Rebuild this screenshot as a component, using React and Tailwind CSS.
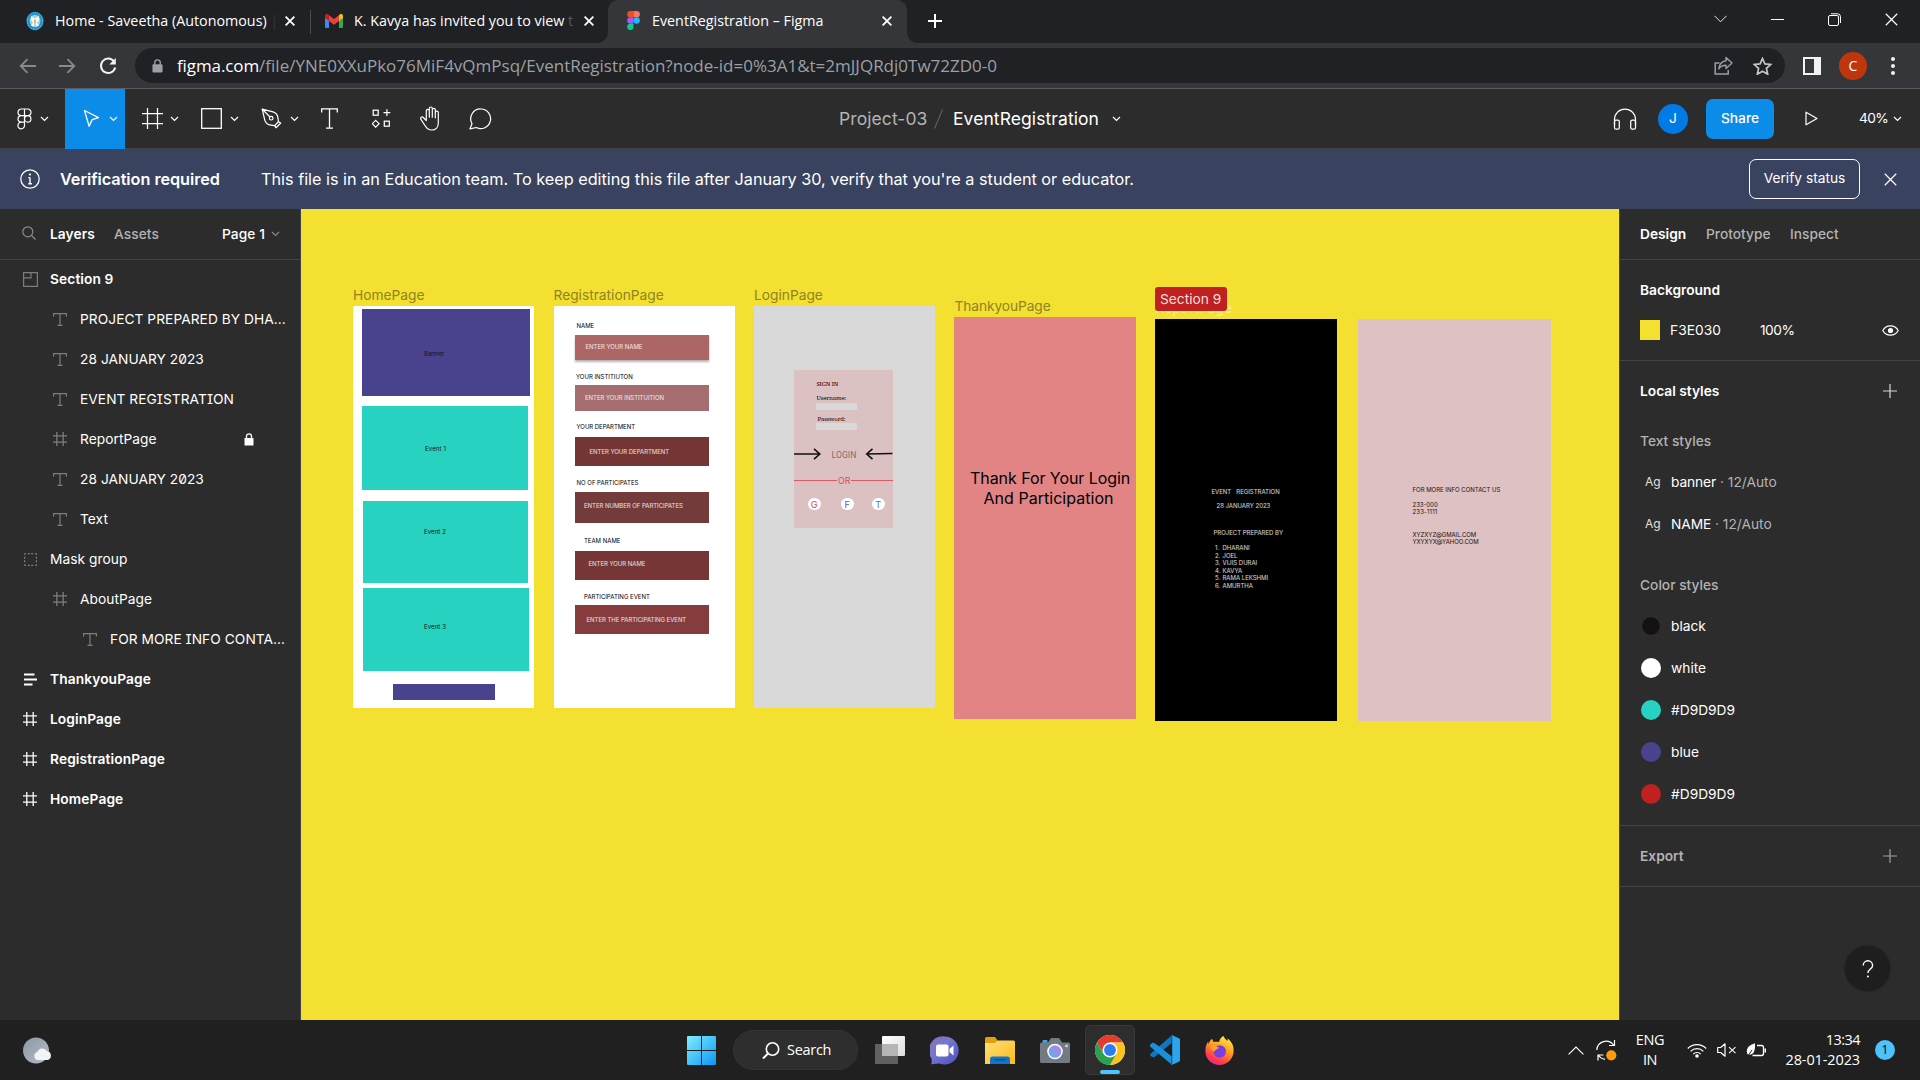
import React from "react";

const UI = "font-['Inter',sans-serif]";
const SYS = "font-['Open_Sans','Noto_Sans',sans-serif]";

function Svg({ w, h, children, className = "", vb }) {
  return (
    <svg width={w} height={h} viewBox={vb || `0 0 ${w} ${h}`} fill="none" className={"block shrink-0 " + className}>
      {children}
    </svg>
  );
}

function Chevron({ className = "" }) {
  return (
    <Svg w={9} h={6} className={className}>
      <path d="M1 1l3.5 3.5L8 1" stroke="currentColor" strokeWidth="1.2" />
    </Svg>
  );
}

function Cross({ size = 10, sw = 1.8, className = "" }) {
  return (
    <Svg w={size} h={size} vb="0 0 10 10" className={className}>
      <path d="M0.6 0.6l8.8 8.8M9.4 0.6L0.6 9.4" stroke="currentColor" strokeWidth={sw} />
    </Svg>
  );
}

function FigmaMark({ className = "" }) {
  return (
    <Svg w={13} h={19} vb="0 0 12 18" className={className}>
      <path d="M3 0h3v6H3a3 3 0 010-6z" fill="#f24e1e" />
      <path d="M6 0h3a3 3 0 010 6H6z" fill="#ff7262" />
      <path d="M3 6h3v6H3a3 3 0 010-6z" fill="#a259ff" />
      <circle cx="9" cy="9" r="3" fill="#1abcfe" />
      <path d="M3 12h3v3a3 3 0 11-3-3z" fill="#0acf83" />
    </Svg>
  );
}

function TabStrip() {
  return (
    <div className={"flex h-[43px] bg-[#202124] text-white text-[14.300px] " + SYS}>
      <div className="flex h-[41px] w-[310px] items-center pl-[26px] pr-[15px]">
        <Svg w={18} h={20}>
          <ellipse cx="9" cy="10" rx="8.6" ry="9.3" fill="#1d8fc4" />
          <ellipse cx="9" cy="10" rx="7.6" ry="8.4" stroke="#7cc4e4" strokeWidth="1" strokeDasharray="1.2 1" />
          <ellipse cx="9" cy="10" rx="5.4" ry="6.2" fill="#9bd2ea" />
          <path d="M5 4.500l3 2.500h2l3-2.500v5l-2 2 2 3-2.500 1-1.500-3-1.500 3-2.500-1 2-3-2-2z" fill="#f4fafc" />
          <path d="M8 8.500h2l-.4 5h-1.200z" fill="#f1a14a" />
        </Svg>
        <div className="ml-[11px] whitespace-nowrap">
          Home - Saveetha (Autonomous) <span className="text-[#34353a]">|</span>
        </div>
        <Cross size={10} className="ml-auto" />
      </div>
      <div className="mt-[10px] h-[24px] w-px bg-[#4a4c50]" />
      <div className="flex h-[41px] w-[297px] items-center pl-[14px] pr-[14px]">
        <Svg w={18} h={14} vb="0 0 18 14">
          <path d="M0 2v10.800A1.200 1.200 0 001.200 14H4V5.500z" fill="#4285f4" />
          <path d="M14 5.500V14h2.800a1.200 1.200 0 001.200-1.200V2z" fill="#34a853" />
          <path d="M14 1.200V7l4-3V2c0-1.900-2-2.700-3.300-1.600z" fill="#fbbc04" />
          <path d="M4 7V1.200l5 3.800 5-3.800V7l-5 3.800z" fill="#ea4335" />
          <path d="M0 2v2l4 3V1.200L3.300.4C2-.7 0 .1 0 2z" fill="#c5221f" />
        </Svg>
        <div className="ml-[11px] whitespace-nowrap">
          K. Kavya has invited you to view <span className="text-[#55565a]">t</span>
        </div>
        <Cross size={10} className="ml-auto" />
      </div>
      <div className="relative flex h-[43px] w-[299px] items-center rounded-t-[10px] bg-[#35363a] pb-[2px] pl-[19px] pr-[15px]">
        <div className="absolute -left-[10px] bottom-0 h-[10px] w-[10px] bg-[radial-gradient(circle_at_0_0,#202124_9.500px,#35363a_10px)]" />
        <div className="absolute -right-[10px] bottom-0 h-[10px] w-[10px] bg-[radial-gradient(circle_at_100%_0,#202124_9.500px,#35363a_10px)]" />
        <FigmaMark />
        <span className="ml-[12px] whitespace-nowrap">EventRegistration – Figma</span>
        <Cross size={10} className="ml-auto" />
      </div>
      <div className="flex h-[41px] flex-1 items-center">
        <Svg w={14} h={14} className="ml-[21px]">
          <path d="M7 0v14M0 7h14" stroke="#fff" strokeWidth="2" />
        </Svg>
        <div className="ml-auto flex items-center pb-[3px]">
          <Svg w={13} h={8} className="mr-[44px]">
            <path d="M.5.8l6 6 6-6" stroke="#e8e8e8" strokeWidth="1" />
          </Svg>
          <div className="mr-[44px] h-px w-[13px] bg-white" />
          <Svg w={13} h={13} className="mr-[44px]">
            <rect x=".5" y="2.500" width="10" height="10" rx="1.500" stroke="#fff" />
            <path d="M3 .8h6.500a3 3 0 013 3V10" stroke="#fff" />
          </Svg>
          <Cross size={13} sw={0.9} className="mr-[22px]" />
        </div>
      </div>
    </div>
  );
}

function AddressBar() {
  return (
    <div className="flex h-[46px] items-center border-b border-[#5b5c5f] bg-[#35363a]">
      <Svg w={18} h={16} className="ml-[19px] text-[#87898c]">
        <path d="M17 8H2M8.500 1.200L1.700 8l6.800 6.800" stroke="currentColor" strokeWidth="1.800" />
      </Svg>
      <Svg w={18} h={16} className="ml-[21px] text-[#87898c]">
        <path d="M1 8h15M9.500 1.200L16.300 8l-6.800 6.800" stroke="currentColor" strokeWidth="1.800" />
      </Svg>
      <Svg w={18} h={18} className="ml-[23px]">
        <path d="M15 4.500A7.200 7.200 0 1016.200 10.500" stroke="#f1f3f4" strokeWidth="2" />
        <path d="M16.800 1v6.500h-6.500z" fill="#f1f3f4" />
      </Svg>
      <div className="ml-[18px] flex h-[35px] w-[1650px] items-center rounded-full bg-[#202124] pl-[17px] pr-[13px]">
        <Svg w={11} h={14} vb="0 0 12 15">
          <rect x=".5" y="5.500" width="11" height="9" rx="1.300" fill="#9aa0a6" />
          <path d="M3 6V3.800a3 3 0 016 0V6" stroke="#9aa0a6" strokeWidth="1.500" />
        </Svg>
        <div className={"ml-[14px] whitespace-nowrap text-[17px] text-[#9aa0a6] " + SYS}>
          <span className="tracking-[-0.100px] text-white">figma.com</span>
          <span>/file/YNE0XXuPko76MiF4vQmPsq/EventRegistration?node-id=0%3A1&amp;t=2mJJQRdj0Tw72ZD0-0</span>
        </div>
        <Svg w={19} h={19} className="ml-auto">
          <path d="M5.500 7H1.200v11h13v-4" stroke="#9aa0a6" strokeWidth="1.500" />
          <path d="M12 1.500L18 7l-6 5.500V9.300c-3.500 0-5.500 1-7.200 3.500.5-4.500 3-7.300 7.200-8z" stroke="#9aa0a6" strokeWidth="1.400" strokeLinejoin="round" />
        </Svg>
        <Svg w={19} h={18} className="ml-[20px]">
          <path d="M9.500 1.500l2.400 5.400 5.900.6-4.400 3.900 1.300 5.800-5.200-3-5.200 3 1.300-5.800L1.200 7.500l5.900-.6z" stroke="#c4c7ca" strokeWidth="1.700" />
        </Svg>
      </div>
      <Svg w={18} h={18} className="ml-[18px]">
        <rect x="1" y="1" width="16" height="16" stroke="#f1f3f4" strokeWidth="2" />
        <rect x="11" y="1" width="6" height="16" fill="#f1f3f4" />
      </Svg>
      <div className={"ml-[18px] flex h-[28px] w-[28px] items-center justify-center rounded-full bg-[#bf360c] text-[14px] text-white " + SYS}>C</div>
      <div className="ml-[24px] flex flex-col gap-[3px]">
        <div className="h-[4px] w-[4px] rounded-full bg-[#f1f3f4]" />
        <div className="h-[4px] w-[4px] rounded-full bg-[#f1f3f4]" />
        <div className="h-[4px] w-[4px] rounded-full bg-[#f1f3f4]" />
      </div>
    </div>
  );
}

function FigmaToolbar() {
  return (
    <div className={"flex h-[60px] items-center border-b border-[#444] bg-[#2c2c2c] text-white " + UI}>
      <div className="flex w-[65px] items-center pl-[17px]">
        <Svg w={15} h={22}>
          <path d="M7.500 1H4.300a3.300 3.300 0 000 6.600h3.200zM7.500 1h3.200a3.300 3.300 0 010 6.600H7.500zM7.500 7.600H4.300a3.300 3.300 0 000 6.600h3.200zM7.500 14.200H4.300a3.300 3.300 0 103.200 3.300z" stroke="#fff" strokeWidth="1.200" />
          <circle cx="10.700" cy="10.900" r="3.200" stroke="#fff" strokeWidth="1.200" />
        </Svg>
        <Chevron className="ml-[8px]" />
      </div>
      <div className="flex h-[60px] w-[60px] items-center bg-[#0c8ce9] pl-[18px]">
        <Svg w={17} h={19}>
          <path d="M1.500 1.500L15.500 8.600l-6.300 2-3.100 6.600z" stroke="#fff" strokeWidth="1.300" strokeLinejoin="round" />
        </Svg>
        <Chevron className="ml-[9px]" />
      </div>
      <div className="flex w-[60px] items-center pl-[17px]">
        <Svg w={21} h={21}>
          <path d="M5.500 0v21M15.500 0v21M0 5.500h21M0 15.500h21" stroke="#fff" strokeWidth="1.250" />
        </Svg>
        <Chevron className="ml-[7px]" />
      </div>
      <div className="flex w-[60px] items-center pl-[16px]">
        <Svg w={21} h={21}>
          <rect x=".7" y=".7" width="19.600" height="19.600" stroke="#fff" strokeWidth="1.300" />
        </Svg>
        <Chevron className="ml-[8px]" />
      </div>
      <div className="flex w-[60px] items-center pl-[16px]">
        <Svg w={21} h={21}>
          <path d="M1.200 1.200l10.800 2.700c3 .9 4.700 3.300 5 6.300l.4 3.600-3.800 3.800-3.600-.4c-3-.3-5.400-2-6.200-5z" stroke="#fff" strokeWidth="1.250" strokeLinejoin="round" />
          <path d="M1.200 1.200l7.600 7.600M17.200 13.500l2.500 1.500-4.700 4.700-1.500-2.400" stroke="#fff" strokeWidth="1.250" strokeLinejoin="round" />
          <circle cx="10.200" cy="10.200" r="1.800" stroke="#fff" strokeWidth="1.200" />
        </Svg>
        <Chevron className="ml-[8px]" />
      </div>
      <div className="flex w-[48px] justify-center">
        <Svg w={17} h={21}>
          <path d="M.7 4.500V.8h15.600v3.700M8.500.8v19.400M5 20.200h7" stroke="#fff" strokeWidth="1.300" />
        </Svg>
      </div>
      <div className="flex w-[56px] justify-center">
        <Svg w={19} h={19}>
          <rect x="1.200" y="1.200" width="5" height="5" stroke="#fff" strokeWidth="1.250" />
          <path d="M14.900.3v6.800M11.500 3.700h6.800" stroke="#fff" strokeWidth="1.250" />
          <path d="M3.700 11.300l3.400 3.400-3.400 3.400-3.400-3.400z" stroke="#fff" strokeWidth="1.200" />
          <rect x="12.300" y="12.200" width="5" height="5" stroke="#fff" strokeWidth="1.250" />
        </Svg>
      </div>
      <div className="flex w-[42px] justify-center">
        <Svg w={23} h={25}>
          <path d="M7.300 14.500V4.800a1.500 1.500 0 013 0v6.400V2.500a1.500 1.500 0 013 0v8.700V3.800a1.500 1.500 0 013 0v8V6.600a1.500 1.500 0 013 0V17c0 4-2.500 7-6.500 7-3.500 0-5-1.500-6.500-4l-4.500-6.800c-.9-1.700 1.200-3 2.500-1.700z" stroke="#fff" strokeWidth="1.200" strokeLinejoin="round" />
        </Svg>
      </div>
      <div className="flex w-[58px] justify-center">
        <Svg w={23} h={22}>
          <path d="M12 1a9.800 9.800 0 11-4.700 18.500L1 20.800l2-5A9.900 9.900 0 0112 1z" stroke="#fff" strokeWidth="1.250" strokeLinejoin="round" />
        </Svg>
      </div>
      <div className="ml-[330px] flex items-center whitespace-nowrap pt-px text-[17.500px] tracking-[0.080px]">
        <div className="w-[95px] text-[#b3b3b3]">Project-03</div>
        <Svg w={9} h={20} className="mr-[10px]"><path d="M8.500.5L.5 19.500" stroke="#6b6b6b" /></Svg>
        <div className="w-[159px]">EventRegistration</div>
        <Chevron />
      </div>
      <div className="ml-auto flex items-center">
        <Svg w={24} h={22} className="mr-[21px]">
          <path d="M1.500 17V11.500a10.500 10.500 0 0121 0V17" stroke="#fff" strokeWidth="1.250" />
          <rect x="1.500" y="12" width="4.800" height="9.200" rx="1.500" stroke="#fff" strokeWidth="1.250" />
          <rect x="17.700" y="12" width="4.800" height="9.200" rx="1.500" stroke="#fff" strokeWidth="1.250" />
        </Svg>
        <div className="flex h-[30px] w-[30px] items-center justify-center rounded-full bg-[#007be5] text-[13.750px]">J</div>
        <div className="ml-[18px] flex h-[40px] w-[68px] items-center justify-center rounded-[7px] bg-[#0c8ce9] text-[13.750px] font-medium">Share</div>
        <Svg w={13} h={15} className="ml-[31px]"><path d="M1 1.200l11 6.300-11 6.300z" stroke="#fff" strokeWidth="1.200" strokeLinejoin="round" /></Svg>
        <div className="ml-[41px] w-[34px] text-[13.750px] tracking-[-0.600px]">40%</div>
        <Chevron className="mr-[18px]" />
      </div>
    </div>
  );
}

function Notice() {
  return (
    <div className={"flex h-[60px] items-center bg-[#394360] text-[16.250px] text-white " + UI}>
      <Svg w={20} h={20} className="ml-[20px]">
        <circle cx="10" cy="10" r="9.200" stroke="#fff" strokeWidth="1.250" />
        <path d="M10 8.500v6M8.300 14.700h3.600M8.300 8.600H10" stroke="#fff" strokeWidth="1.400" />
        <circle cx="10" cy="5.500" r="1.100" fill="#fff" />
      </Svg>
      <div className="ml-[20px] w-[201px] whitespace-nowrap font-semibold tracking-[-0.040px]">Verification required</div>
      <div className="whitespace-nowrap tracking-[-0.010px]">This file is in an Education team. To keep editing this file after January 30, verify that you're a student or educator.</div>
      <div className="ml-auto mr-[24px] flex h-[40px] w-[111px] items-center justify-center rounded-[7px] border border-white pb-[2px] text-[13.750px]">Verify status</div>
      <Cross size={13} sw={0.9} className="mr-[23px]" />
    </div>
  );
}

const icons = {
  text: (
    <Svg w={14} h={13}>
      <path d="M.6 3.500V.7h12.800v2.800M7 .7v11.600M4.500 12.300h5" stroke="currentColor" strokeWidth="1.200" />
    </Svg>
  ),
  frame: (
    <Svg w={14} h={14}>
      <path d="M3.800 0v14M10.200 0v14M0 3.800h14M0 10.200h14" stroke="currentColor" strokeWidth="1.300" />
    </Svg>
  ),
  section: (
    <Svg w={15} h={15}>
      <path d="M.6.6h13.800v13.800H.6zM8 .6v5.200H.6" stroke="currentColor" strokeWidth="1.200" />
    </Svg>
  ),
  mask: (
    <Svg w={13} h={13}>
      <rect x=".6" y=".6" width="11.800" height="11.800" stroke="currentColor" strokeWidth="1.200" strokeDasharray="1.200 2 2 1.400 2 2 1.200 0" />
    </Svg>
  ),
  auto: (
    <Svg w={13} h={13}>
      <path d="M0 1.500h10.500M0 6.500h13M0 11.500h8.500" stroke="currentColor" strokeWidth="2" />
    </Svg>
  ),
};

function Layer({ icon, level = 0, bold, bright, locked, children }) {
  const pad = level === 2 ? "pl-[80px]" : level === 1 ? "pl-[50px]" : "pl-[20px]";
  return (
    <div className={"flex h-[40px] items-center " + pad}>
      <div className={"flex w-[20px] justify-center " + (bright ? "text-white" : "text-[#7d7d7d]")}>{icons[icon]}</div>
      <div className={"ml-[10px] whitespace-nowrap [font-feature-settings:'ss02'] " + (bold ? "font-semibold tracking-[0.100px]" : "tracking-[0.040px]")}>{children}</div>
      {locked && (
        <Svg w={10} h={13} className="ml-auto mr-[46px]">
          <rect x=".5" y="5" width="9" height="7.500" rx=".6" fill="#fff" />
          <path d="M2.500 5.500V3.300a2.500 2.500 0 015 0v2.200" stroke="#fff" strokeWidth="1.300" />
        </Svg>
      )}
    </div>
  );
}

function LeftPanel() {
  return (
    <div className={"w-[301px] shrink-0 border-r border-[#444] bg-[#2c2c2c] text-[13.750px] text-white " + UI}>
      <div className="flex h-[51px] items-center border-b border-[#444] pl-[22px]">
        <Svg w={14} h={14} className="mb-[2px] text-[#8a8a8a]">
          <circle cx="5.800" cy="5.800" r="5" stroke="currentColor" strokeWidth="1.200" />
          <path d="M9.500 9.500l4 4" stroke="currentColor" strokeWidth="1.200" />
        </Svg>
        <div className="ml-[14px] w-[64px] font-semibold tracking-[0.090px]">Layers</div>
        <div className="w-[108px] font-medium tracking-[0.070px] text-[#b3b3b3]">Assets</div>
        <div className="w-[49px] whitespace-nowrap font-medium tracking-[0.070px]">Page 1</div>
        <Chevron className="text-[#8a8a8a]" />
      </div>
      <div className="-mt-px">
        <Layer icon="section" bold>Section 9</Layer>
        <Layer icon="text" level={1}>PROJECT PREPARED BY DHA...</Layer>
        <Layer icon="text" level={1}>28 JANUARY 2023</Layer>
        <Layer icon="text" level={1}>EVENT REGISTRATION</Layer>
        <Layer icon="frame" level={1} locked>ReportPage</Layer>
        <Layer icon="text" level={1}>28 JANUARY 2023</Layer>
        <Layer icon="text" level={1}>Text</Layer>
        <Layer icon="mask">Mask group</Layer>
        <Layer icon="frame" level={1}>AboutPage</Layer>
        <Layer icon="text" level={2}>FOR MORE INFO CONTA...</Layer>
        <Layer icon="auto" bold bright>ThankyouPage</Layer>
        <Layer icon="frame" bold bright>LoginPage</Layer>
        <Layer icon="frame" bold bright>RegistrationPage</Layer>
        <Layer icon="frame" bold bright>HomePage</Layer>
      </div>
    </div>
  );
}

function Plus({ className = "" }) {
  return (
    <Svg w={14} h={14} className={className}>
      <path d="M7 0v14M0 7h14" stroke="currentColor" strokeWidth="1.200" />
    </Svg>
  );
}

function ColorRow({ swatch, children }) {
  return (
    <div className="flex h-[42px] items-center pl-[21px]">
      <div className={"h-[20px] w-[20px] rounded-full " + swatch} />
      <div className="ml-[10px]">{children}</div>
    </div>
  );
}

function TextStyleRow({ name }) {
  return (
    <div className="flex h-[42px] items-center whitespace-nowrap pl-[25px]">
      <span className="w-[26px] text-[12px] text-[#e0e0e0]">Ag</span>
      <span className="tracking-[-0.100px]">{name}</span>
      <span className="whitespace-pre text-[#b3b3b3]"> · 12/Auto</span>
    </div>
  );
}

function RightPanel() {
  return (
    <div className={"relative w-[301px] shrink-0 border-l border-[#444] bg-[#2c2c2c] text-[13.750px] text-white " + UI}>
      <div className="flex h-[51px] items-center border-b border-[#444] pl-[20px]">
        <div className="w-[66px] font-semibold">Design</div>
        <div className="w-[84px] font-medium text-[#b3b3b3]">Prototype</div>
        <div className="font-medium text-[#b3b3b3]">Inspect</div>
      </div>
      <div className="h-[101px] border-b border-[#444] pt-[10px]">
        <div className="flex h-[40px] items-center pl-[20px] font-semibold">Background</div>
        <div className="flex h-[40px] items-center pl-[20px]">
          <div className="h-[20px] w-[20px] bg-[#f3e030]" />
          <div className="ml-[10px] w-[90px] tracking-[0.040px]">F3E030</div>
          <span className="tracking-[-0.500px]">100%</span>
          <Svg w={17} h={11} className="ml-auto mr-[21px]">
            <path d="M.8 5.500C2.500 2.300 5.200.8 8.500.8s6 1.500 7.700 4.700c-1.700 3.200-4.400 4.700-7.700 4.700S2.500 8.700.8 5.500z" stroke="#fff" strokeWidth="1.200" />
            <circle cx="8.500" cy="5.500" r="2.600" fill="#fff" />
          </Svg>
        </div>
      </div>
      <div className="h-[465px] border-b border-[#444] pt-[10px]">
        <div className="flex h-[40px] items-center justify-between pl-[20px] pr-[23px] font-semibold">Local styles<Plus className="text-[#d8d8d8]" /></div>
        <div className="mt-[10px] flex h-[40px] items-center pl-[20px] font-medium text-[#b3b3b3]">Text styles</div>
        <TextStyleRow name="banner" />
        <TextStyleRow name="NAME" />
        <div className="mt-[20px] flex h-[40px] items-center pl-[20px] font-medium text-[#b3b3b3]">Color styles</div>
        <ColorRow swatch="border border-[#333] bg-[#171212]">black</ColorRow>
        <ColorRow swatch="bg-white">white</ColorRow>
        <ColorRow swatch="bg-[#27d3c0]">#D9D9D9</ColorRow>
        <ColorRow swatch="bg-[#49428d]">blue</ColorRow>
        <ColorRow swatch="bg-[#c02020]">#D9D9D9</ColorRow>
      </div>
      <div className="flex h-[61px] items-center justify-between border-b border-[#444] pl-[20px] pr-[23px] font-semibold text-[#b3b3b3]">Export<Plus className="text-[#a0a0a0]" /></div>
      <div className="absolute bottom-[29px] right-[30px] flex h-[45px] w-[45px] items-center justify-center rounded-full bg-[#1e1e1e] shadow-[0_0_2px_rgba(0,0,0,0.500)]">
        <Svg w={12} h={18} className="ml-px">
          <path d="M1.200 5.500a4.700 4.700 0 119.400 0c0 3.500-4.700 3.600-4.700 7.500" stroke="#fff" strokeWidth="1.400" />
          <circle cx="5.900" cy="16.500" r=".95" fill="#fff" />
        </Svg>
      </div>
    </div>
  );
}

/* A text layer placed by its left edge and its vertical centre. */
function Txt({ at, className = "text-[6px]", children }) {
  return <span className={"absolute -translate-y-1/2 whitespace-pre leading-none " + at + " " + className}>{children}</span>;
}
function Box({ at }) {
  return <div className={"absolute " + at} />;
}

const nameCls = "text-[13.750px] text-[#8f841f]";
const serifCls = "font-['Noto_Serif','Liberation_Serif',serif] text-[6px] tracking-[-0.150px]";

function Canvas() {
  return (
    <div className={"relative flex-1 overflow-hidden bg-[#f3e030] " + UI}>
      <Txt at="left-[52px] top-[87px]" className={nameCls}>HomePage</Txt>
      <div className="absolute left-[52px] top-[97px] h-[402px] w-[181px] bg-white text-[#171212]">
        <Box at="left-[9px] top-[3px] h-[87px] w-[168px] bg-[#49428d]" />
        <Box at="left-[9px] top-[100px] h-[84px] w-[166px] bg-[#27d3c0]" />
        <Box at="left-[10px] top-[195px] h-[82px] w-[165px] bg-[#27d3c0]" />
        <Box at="left-[10px] top-[282px] h-[83px] w-[166px] bg-[#27d3c0]" />
        <Box at="left-[40px] top-[378px] h-[15.500px] w-[102px] bg-[#49428d]" />
        <Txt at="left-[71px] top-[47.500px]">Banner</Txt>
        <Txt at="left-[72px] top-[142.500px]" className="text-[6px] tracking-[0.140px]">Event 1</Txt>
        <Txt at="left-[71px] top-[225.500px]" className="text-[6px] tracking-[0.100px]">Event 2</Txt>
        <Txt at="left-[71px] top-[321px]" className="text-[6px] tracking-[0.100px]">Event 3</Txt>
      </div>

      <Txt at="left-[252.500px] top-[87px]" className={nameCls}>RegistrationPage</Txt>
      <div className="absolute left-[253px] top-[97px] h-[402px] w-[181px] bg-white text-black">
        <Txt at="left-[22.500px] top-[19.500px]">NAME</Txt>
        <Box at="left-[21px] top-[29px] h-[25px] w-[134px] bg-[#ac6666] shadow-[0_2px_2px_rgba(0,0,0,0.300)]" />
        <Txt at="left-[22px] top-[70.500px]">YOUR INSTITIUTON</Txt>
        <Box at="left-[21px] top-[78.500px] h-[26px] w-[134px] bg-[#a56d6f]" />
        <Txt at="left-[22.500px] top-[120.500px]" className="text-[6px] tracking-[-0.040px]">YOUR DEPARTMENT</Txt>
        <Box at="left-[21px] top-[131px] h-[29px] w-[134px] bg-[#743535]" />
        <Txt at="left-[22.500px] top-[176.500px]">NO OF PARTICIPATES</Txt>
        <Box at="left-[21px] top-[186px] h-[30.500px] w-[134px] bg-[#743b3b]" />
        <Txt at="left-[30px] top-[234.500px]">TEAM NAME</Txt>
        <Box at="left-[21px] top-[244.500px] h-[29.500px] w-[134px] bg-[#773636]" />
        <Txt at="left-[30px] top-[290.500px]">PARTICIPATING EVENT</Txt>
        <Box at="left-[21px] top-[298.500px] h-[29.500px] w-[134px] bg-[#863c3c]" />
        <div className="tracking-[-0.030px] text-white/85">
          <Txt at="left-[31.500px] top-[40.500px]">ENTER YOUR NAME</Txt>
          <Txt at="left-[31px] top-[92px]">ENTER YOUR INSTITUITION</Txt>
          <Txt at="left-[35.500px] top-[146px]">ENTER YOUR DEPARTMENT</Txt>
          <Txt at="left-[30px] top-[199.500px]">ENTER NUMBER OF PARTICIPATES</Txt>
          <Txt at="left-[34.500px] top-[257.500px]">ENTER YOUR NAME</Txt>
          <Txt at="left-[32.500px] top-[313.500px]">ENTER THE PARTICIPATING EVENT</Txt>
        </div>
      </div>

      <Txt at="left-[453px] top-[87px]" className={nameCls}>LoginPage</Txt>
      <div className="absolute left-[453px] top-[97px] h-[402px] w-[181px] bg-[#d9d9d9] text-black">
        <div className="absolute left-[40px] top-[64px] h-[158px] w-[99px] bg-[#dcc1c3]">
          <Txt at="left-[22.500px] top-[14px]" className={serifCls}>SIGN IN</Txt>
          <Txt at="left-[22.500px] top-[28px]" className={serifCls}>Username:</Txt>
          <Box at="left-[22px] top-[33px] h-[7px] w-[41px] bg-[#d9d9d9]" />
          <Txt at="left-[23.500px] top-[49px]" className={serifCls}>Password:</Txt>
          <Box at="left-[22px] top-[52.500px] h-[7px] w-[41px] bg-[#d9d9d9]" />
          <Svg w={99} h={12} className="absolute left-0 top-[78px]">
            <path d="M0 6h25.500M20 .8L25.800 6 20 11.200M98.500 5.500L73 6M78.500.8L72.700 6l5.800 5.200" stroke="#111" strokeWidth="1.600" />
          </Svg>
          <Txt at="left-[37.500px] top-[85px]" className="font-['Roboto',sans-serif] text-[8.700px] text-[#8d6a70]">LOGIN</Txt>
          <Box at="left-0 top-[110px] h-px w-[43px] bg-[#dd5c60]" />
          <Box at="left-[57px] top-[110px] h-px w-[42px] bg-[#dd5c60]" />
          <Txt at="left-[44px] top-[110.500px]" className="text-[8.800px] text-[#e0484c]">OR</Txt>
          <Box at="left-[13.500px] top-[127.500px] h-[12px] w-[13.500px] rounded-full bg-white" />
          <Box at="left-[46.500px] top-[127.500px] h-[12px] w-[13.500px] rounded-full bg-white" />
          <Box at="left-[77.500px] top-[127.500px] h-[12px] w-[13.500px] rounded-full bg-white" />
          <Txt at="left-[16.800px] top-[134px]" className="text-[9px] text-[#e8383c]">G</Txt>
          <Txt at="left-[50.500px] top-[134px]" className="text-[9px] text-[#5a50e0]">F</Txt>
          <Txt at="left-[81.300px] top-[134px]" className="text-[9px] text-[#3f74f0]">T</Txt>
        </div>
      </div>

      <Txt at="left-[653.500px] top-[98px]" className="text-[13.750px] tracking-[-0.090px] text-[#8f841f]">ThankyouPage</Txt>
      <div className="absolute left-[653px] top-[108px] h-[402px] w-[182px] bg-[#e28484] text-black">
        <Txt at="left-[16px] top-[161px]" className="text-[16px] tracking-[-0.060px]">Thank For Your Login</Txt>
        <Txt at="left-[29.500px] top-[180.500px]" className="text-[16px] tracking-[0.030px]">And Participation</Txt>
      </div>

      <Txt at="left-[854.500px] top-[99.500px]" className="text-[13.750px] text-[#f9f0a0]">ReportPage</Txt>
      <div className="absolute left-[854px] top-[78px] flex h-[24px] w-[72px] items-center rounded-[3px] bg-[#c02020] pl-[5px] pt-px text-[13.750px] text-[#f6dede]">Section 9</div>
      <div className="absolute left-[854px] top-[110px] h-[402px] w-[182px] bg-black text-white/85">
        <Txt at="left-[56.500px] top-[172.500px]">{"EVENT   REGISTRATION"}</Txt>
        <Txt at="left-[61.500px] top-[187px]">28 JANUARY 2023</Txt>
        <Txt at="left-[58.500px] top-[213.500px]">PROJECT PREPARED BY</Txt>
        <ol className="absolute left-[60px] top-[225.200px] text-[6px] leading-[7.550px]">
          <li className="flex"><span className="w-[7.500px]">1.</span><span>DHARANI</span></li>
          <li className="flex"><span className="w-[7.500px]">2.</span><span>JOEL</span></li>
          <li className="flex whitespace-nowrap"><span className="w-[7.500px]">3.</span><span>VIJIS DURAI</span></li>
          <li className="flex"><span className="w-[7.500px]">4.</span><span>KAVYA</span></li>
          <li className="flex whitespace-nowrap"><span className="w-[7.500px]">5.</span><span>RAMA LEKSHMI</span></li>
          <li className="flex"><span className="w-[7.500px]">6.</span><span>AMURTHA</span></li>
        </ol>
      </div>

      <div className="absolute left-[1057px] top-[110px] h-[402px] w-[193px] bg-[#dec1c3] text-[#171212]">
        <Txt at="left-[54.500px] top-[170.500px]">FOR MORE INFO CONTACT US</Txt>
        <Txt at="left-[54.500px] top-[185.500px]">233-000</Txt>
        <Txt at="left-[54.500px] top-[193px]" className="text-[6px] tracking-[0.170px]">233-1111</Txt>
        <Txt at="left-[54.500px] top-[215.500px]" className="text-[6px] tracking-[-0.040px]">XYZXYZ@GMAIL.COM</Txt>
        <Txt at="left-[54.500px] top-[223px]" className="text-[6px] tracking-[-0.040px]">YXYXYX@YAHOO.COM</Txt>
      </div>
    </div>
  );
}

function Taskbar() {
  return (
    <div className={"flex h-[60px] items-center bg-[#202020] text-white " + SYS}>
      <div className="w-[687px] pl-[23px]">
        <Svg w={29} h={27}>
          <defs>
            <linearGradient id="moon" x1="0" y1="0" x2="1" y2="1"><stop offset="0" stopColor="#8d98a5" /><stop offset="1" stopColor="#b4bcc6" /></linearGradient>
          </defs>
          <circle cx="13" cy="13.500" r="13" fill="url(#moon)" />
          <path d="M15 23a4 4 0 01-.5-7.900 5.200 5.200 0 019.500-.8A4.400 4.400 0 0124.300 23z" fill="#f2f5f8" />
        </Svg>
      </div>
      <Svg w={29} h={29}>
        <defs>
          <linearGradient id="win" x1="0" y1="0" x2="1" y2="1"><stop offset="0" stopColor="#7ff0ff" /><stop offset="1" stopColor="#0a96f5" /></linearGradient>
        </defs>
        <path d="M0 1a1 1 0 011-1h13v14H0zM15 0h13a1 1 0 011 1v13H15zM0 15h14v14H1a1 1 0 01-1-1zM15 15h14v13a1 1 0 01-1 1H15z" fill="url(#win)" />
      </Svg>
      <div className="ml-[17px] flex h-[40px] w-[125px] items-center rounded-full border border-[#343434] bg-[#2e2e2e] pl-[28px]">
        <Svg w={18} h={17}>
          <circle cx="10.500" cy="7" r="6.200" stroke="#fff" strokeWidth="1.600" />
          <path d="M6 11.500L1 16.500" stroke="#fff" strokeWidth="2" />
        </Svg>
        <span className="ml-[7px] text-[14.500px] tracking-[-0.300px]">Search</span>
      </div>
      <Svg w={30} h={28} className="ml-[17px]">
        <defs>
          <linearGradient id="tvw" x1="0" y1="0" x2="1" y2="1"><stop offset="0" stopColor="#fff" /><stop offset="1" stopColor="#dcdcdc" /></linearGradient>
        </defs>
        <rect x="7" y="0" width="23" height="20" rx="1" fill="url(#tvw)" />
        <rect x="0" y="8" width="23" height="20" rx="1" fill="#777" fillOpacity=".75" />
        <rect x="7" y="8" width="16" height="12" fill="#b5b5b5" />
      </Svg>
      <Svg w={29} h={29} className="ml-[25px]">
        <defs>
          <linearGradient id="chat" x1="0" y1="0" x2="1" y2="1"><stop offset="0" stopColor="#8c6fb0" /><stop offset=".4" stopColor="#7478d0" /><stop offset="1" stopColor="#4b4fc0" /></linearGradient>
        </defs>
        <path d="M14.500.5a14 14 0 11-5 27l-8.500.8c1.300-2.300.8-4 .3-6A14 14 0 0114.500.5z" fill="url(#chat)" />
        <rect x="6" y="8.500" width="12.500" height="12" rx="2" fill="#fff" />
        <path d="M19.500 13l4-3.500v10l-4-3.500z" fill="#fff" />
      </Svg>
      <Svg w={30} h={27} className="ml-[26px]">
        <defs>
          <linearGradient id="fold" x1="0" y1="0" x2="1" y2="1"><stop offset="0" stopColor="#ffe07a" /><stop offset="1" stopColor="#fbb91a" /></linearGradient>
        </defs>
        <path d="M0 1.500A1.500 1.500 0 011.500 0H10l3 4v4H0z" fill="#e2a010" />
        <path d="M0 6h10l3-2.500h15.500A1.500 1.500 0 0130 5v22H0z" fill="url(#fold)" />
        <path d="M5 27v-5a2.500 2.500 0 012.500-2.500h15A2.500 2.500 0 0125 22v5z" fill="#1175c8" />
        <path d="M9 22.700h12" stroke="#0a4a8c" strokeWidth="1.200" />
      </Svg>
      <Svg w={30} h={25} className="ml-[25px]">
        <defs>
          <linearGradient id="lens" x1="0" y1="1" x2="1" y2="0"><stop offset="0" stopColor="#4fb4f0" /><stop offset="1" stopColor="#c87be0" /></linearGradient>
        </defs>
        <rect x="2.500" y="2" width="5" height="4" rx="1" fill="#2fa8e8" />
        <path d="M8 4.500L11 0h8l3 4.500h6.500A1.500 1.500 0 0130 6v17.500a1.500 1.500 0 01-1.500 1.500h-27A1.500 1.500 0 010 23.500V6a1.500 1.500 0 011.500-1.500z" fill="#727a83" />
        <circle cx="15" cy="13.500" r="7.800" fill="#fff" />
        <circle cx="15" cy="13.500" r="6.300" fill="url(#lens)" />
        <circle cx="26.500" cy="8" r="1.300" fill="#d8dce0" />
      </Svg>
      <div className="relative ml-[15px] flex h-[50px] w-[50px] items-center justify-center rounded-[5px] border border-[#383838] bg-[#2d2d2d]">
        <Svg w={30} h={30} vb="0 0 48 48">
          <circle cx="24" cy="24" r="24" fill="#fff" />
          <path d="M24 12h20.800A24 24 0 003.200 12l10.400 18z" fill="#e33b2e" />
          <path d="M34.400 30L24 48a24 24 0 0020.800-36H24z" fill="#fcc31e" />
          <path d="M13.600 30L3.200 12A24 24 0 0024 48l10.400-18z" fill="#2aa14b" />
          <circle cx="24" cy="24" r="12" fill="#fff" />
          <circle cx="24" cy="24" r="9.500" fill="#2f7cf0" />
        </Svg>
        <div className="absolute bottom-0 left-[14px] h-[4px] w-[20px] rounded-full bg-[#4cc2ff]" />
      </div>
      <Svg w={30} h={30} className="ml-[15px]" vb="0 0 100 100">
        <path d="M72 2L72 27 24 66 12 75 2 70 0 64z" fill="#0a78c2" />
        <path d="M0 36l2-6 9-5 13 8 48 38v27L0 38z" fill="#1a8fdb" />
        <path d="M70 99a6 6 0 004 0l22-10a6 6 0 004-6V17a6 6 0 00-4-6L74 1a6 6 0 00-7 1c3-2 7 0 7 4v88c0 4-4 6-7 4z" fill="#2aa5f0" />
      </Svg>
      <Svg w={29} h={29} className="ml-[25px]">
        <defs>
          <linearGradient id="fox" x1=".8" y1="0" x2=".3" y2="1"><stop offset="0" stopColor="#fff04a" /><stop offset=".45" stopColor="#ff9a1f" /><stop offset=".8" stopColor="#ff3b4e" /><stop offset="1" stopColor="#e8268e" /></linearGradient>
        </defs>
        <path d="M18.500 0c1 2.500 2 3 4 5 .3-.9.300-1.500.1-2.500C27 6 29 10 28.600 15.500 28 23.500 22 29 14.500 29S.6 23.500.4 15.500C.2 11.500 1.300 8 3 5.700L3.500 8c1-2.500 2-4 3.500-5.200L8.500 6c2.500-.5 3.500-.5 5.500 0C14.500 3.500 16 1.200 18.500 0z" fill="url(#fox)" />
        <circle cx="14.800" cy="15.500" r="6.200" fill="#7a3fe0" />
        <path d="M5 10.500c3-2 6-1 9 1.500-2 1-3.500 1.500-4.500 3.500C7 15 5.500 13 5 10.500z" fill="#ffa42a" />
      </Svg>
      <div className="ml-auto flex items-center">
        <Svg w={16} h={9} className="mr-[12px]"><path d="M.6 8.400L8 1l7.400 7.400" stroke="#fff" strokeWidth="1.200" /></Svg>
        <Svg w={21} h={21}>
          <path d="M.8 10A9.300 9.300 0 0117.500 5M18.500 0v5.500H13M2 20.500V15h5.500M2.500 15.500A9.300 9.300 0 009 19.300" stroke="#fff" strokeWidth="1.200" />
          <circle cx="15.300" cy="15.300" r="5.100" fill="#ff9b0b" />
        </Svg>
        <div className="ml-[16px] w-[34px] text-center text-[14.500px] leading-[20px] tracking-[-0.400px]">ENG<br />IN</div>
        <Svg w={20} h={15} className="ml-[20px]">
          <path d="M.8 5.500a13 13 0 0118.400 0M3.600 8.300a9 9 0 0112.800 0M6.300 11a5.300 5.300 0 017.400 0" stroke="#fff" strokeWidth="1.200" />
          <circle cx="10" cy="13" r="1.800" fill="#fff" />
        </Svg>
        <Svg w={20} h={14} className="ml-[10px]">
          <path d="M.7 4.500h3L8 .8v12.400L3.700 9.500h-3z" stroke="#fff" strokeWidth="1.200" strokeLinejoin="round" />
          <path d="M12 4.200l6.500 6M18.500 4.200l-6.500 6" stroke="#fff" strokeWidth="1.100" />
        </Svg>
        <Svg w={21} h={15} className="ml-[9px]">
          <path d="M11 2.500h4.500a2 2 0 012 2v6a2 2 0 01-2 2h-9" stroke="#fff" strokeWidth="1.300" />
          <path d="M18.500 5.500h1.500v4h-1.500z" fill="#fff" />
          <path d="M9 .3C3.500 2 .8 4.500.8 8.500c0 2 .8 3.300 2.700 3.300C7.300 11.800 9.500 8 9 .3z" fill="#fff" />
          <path d="M1 14.500L6 7" stroke="#202020" strokeWidth="1" />
        </Svg>
        <div className="ml-[9px] w-[84px] text-right text-[14.500px] leading-[20px]"><span className="tracking-[-0.550px]">13:34</span><br /><span className="tracking-[-0.120px]">28-01-2023</span></div>
        <div className="ml-[15px] mr-[25px] flex h-[20px] w-[20px] items-center justify-center rounded-full bg-[#4cc2ff] text-[12px] text-black">1</div>
      </div>
    </div>
  );
}

export default function App() {
  return (
    <div className="flex h-[1080px] w-[1920px] flex-col overflow-hidden bg-[#2c2c2c]">
      <TabStrip />
      <AddressBar />
      <FigmaToolbar />
      <Notice />
      <div className="flex min-h-0 flex-1">
        <LeftPanel />
        <Canvas />
        <RightPanel />
      </div>
      <Taskbar />
    </div>
  );
}
